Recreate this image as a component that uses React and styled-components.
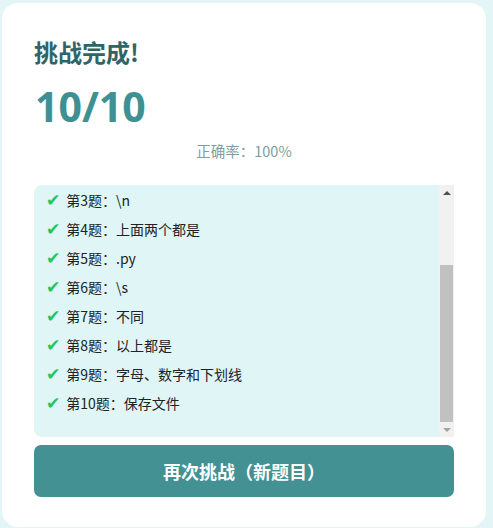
import React, { useLayoutEffect, useRef, useState } from 'react'
import styled, { createGlobalStyle } from 'styled-components'

const GlobalStyle = createGlobalStyle`
    html, body {
        margin: 0;
        padding: 0;
        background: #e3f5f6;
        font-family: "Noto Sans CJK SC", "Noto Sans", sans-serif;
    }
`

const Page = styled.div`
    padding: 3px 7px 0 2px;
`

const Card = styled.div`
    background: #ffffff;
    border-radius: 16px;
    height: 524px;
    box-sizing: border-box;
    padding: 30px 32px 0 32px;
    display: flex;
    flex-direction: column;
`

const Title = styled.h2`
    margin: 0;
    font-size: 24px;
    line-height: 38px;
    font-weight: 700;
    color: #2f6566;
`

const Score = styled.div`
    margin-top: 11px;
    font-family: "Open Sans", "Noto Sans", sans-serif;
    font-size: 41px;
    line-height: 48px;
    font-weight: 700;
    color: #3f9092;
    padding-left: 1px;
`

const Rate = styled.div`
    margin-top: 11px;
    text-align: center;
    font-size: 14.5px;
    line-height: 20px;
    color: #7f9da0;
`

const ListBox = styled.div`
    margin-top: 24px;
    height: 252px;
    display: flex;
    background: #dff5f6;
    border-radius: 8px 0 0 8px;
    overflow: hidden;
`

const ListBody = styled.div`
    flex: 1;
    overflow-y: auto;
    padding: 46px 12px 20px 12px;
    box-sizing: border-box;
    scrollbar-width: none;

    &::-webkit-scrollbar {
        display: none;
    }
`

const Track = styled.div`
    width: 15px;
    flex-shrink: 0;
    background: #f1f1f1;
    display: flex;
    flex-direction: column;
`

const Arrow = styled.div`
    height: 15px;
    display: flex;
    align-items: center;
    justify-content: center;

    &::after {
        content: '';
        border-left: 4px solid transparent;
        border-right: 4px solid transparent;
        ${(p) => (p.$down
            ? 'border-top: 4px solid #a3a3a3;'
            : 'border-bottom: 4px solid #505050;')}
    }
`

const Rail = styled.div`
    flex: 1;
    display: flex;
    flex-direction: column;
    padding: 0 1px;
`

const Thumb = styled.div`
    background: #c1c1c1;
`

const Item = styled.div`
    display: flex;
    align-items: center;
    height: 29px;
    font-size: 14px;
    color: #222;
`

const Check = styled.span`
    display: inline-flex;
    align-items: center;
    line-height: 1;
    color: #22c55e;
    font-family: "DejaVu Sans", sans-serif;
    font-size: 17px;
    font-weight: 700;
    margin-right: 6px;
    position: relative;
    top: 1px;
`

const Button = styled.button`
    margin-top: 8px;
    height: 52px;
    border: none;
    border-radius: 7px;
    background: #439193;
    color: #ffffff;
    font-family: "Noto Sans CJK SC", sans-serif;
    font-size: 18px;
    font-weight: 700;
    cursor: pointer;
`

const answers = [
    '第1题：print',
    '第2题：#',
    '第3题：\\n',
    '第4题：上面两个都是',
    '第5题：.py',
    '第6题：\\s',
    '第7题：不同',
    '第8题：以上都是',
    '第9题：字母、数字和下划线',
    '第10题：保存文件',
]

const RAIL = 252 - 30

const App = () => {
    const listRef = useRef(null)
    const [bar, setBar] = useState({ top: 0, size: RAIL })

    const measure = () => {
        const el = listRef.current
        if (!el) return
        setBar({
            top: (RAIL * el.scrollTop) / el.scrollHeight,
            size: (RAIL * el.clientHeight) / el.scrollHeight,
        })
    }

    useLayoutEffect(() => {
        if (listRef.current) listRef.current.scrollTop = listRef.current.scrollHeight
        measure()
    }, [])

    return (
        <Page>
            <GlobalStyle />
            <Card>
                <Title>挑战完成!</Title>
                <Score>10/10</Score>
                <Rate>正确率：100%</Rate>
                <ListBox>
                    <ListBody ref={listRef} onScroll={measure}>
                        {answers.map((a) => (
                            <Item key={a}>
                                <Check>✔</Check>
                                {a}
                            </Item>
                        ))}
                    </ListBody>
                    <Track>
                        <Arrow />
                        <Rail>
                            <Thumb style={{ marginTop: bar.top, height: bar.size }} />
                        </Rail>
                        <Arrow $down />
                    </Track>
                </ListBox>
                <Button>再次挑战（新题目）</Button>
            </Card>
        </Page>
    )
}

export default App
